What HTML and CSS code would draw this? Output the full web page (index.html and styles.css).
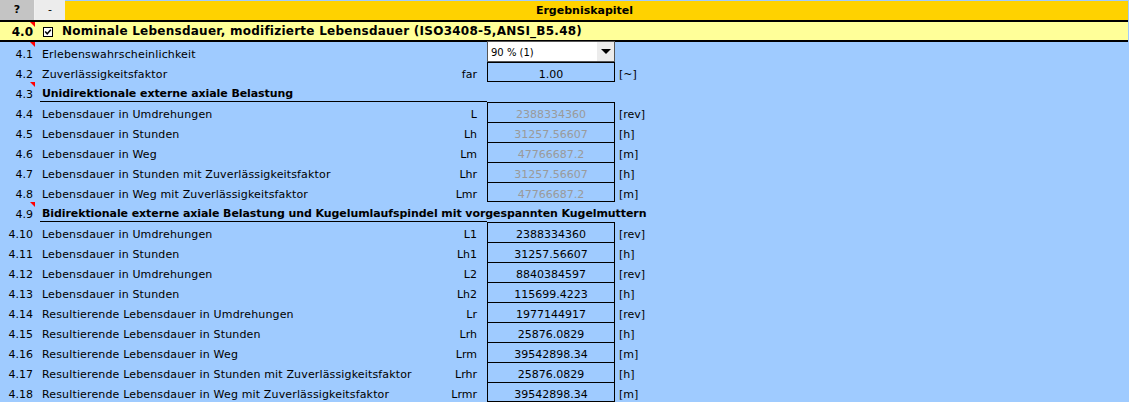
FILE: index.html
```html
<!DOCTYPE html>
<html lang="de">
<head>
  <meta charset="UTF-8">
  <title>Ergebniskapitel</title>
  <link rel="stylesheet" href="styles.css">
</head>
<body>
  <div class="sheet">
    <div class="top-bar">
      <div class="btn-help">?</div>
      <div class="btn-collapse">-</div>
      <div class="chapter-title">Ergebniskapitel</div>
    </div>

    <div class="section-head">
      <div class="num note">4.0</div>
      <div class="head-title">
        <svg class="check" width="10" height="10" viewBox="0 0 10 10"><rect x="0.5" y="0.5" width="9" height="9" fill="#fff" stroke="#000"/><polyline points="2.2,4.6 4.2,6.8 7.8,2.8" fill="none" stroke="#000" stroke-width="1.5"/></svg>
        Nominale Lebensdauer, modifizierte Lebensdauer (ISO3408-5,ANSI_B5.48)
      </div>
    </div>

    <div class="row">
      <div class="num note">4.1</div>
      <div class="label">Erlebenswahrscheinlichkeit</div>
      <div class="select"><span class="select-text">90 % (1)</span><span class="select-btn"></span></div>
      <div class="unit"></div>
    </div>
    <div class="row">
      <div class="num">4.2</div>
      <div class="label">Zuverlässigkeitsfaktor<span class="sym">far</span></div>
      <div class="val last">1.00</div>
      <div class="unit">[~]</div>
    </div>

    <div class="row section">
      <div class="num note">4.3</div>
      <div class="label">Unidirektionale externe axiale Belastung</div>
    </div>
    <div class="row">
      <div class="num">4.4</div>
      <div class="label">Lebensdauer in Umdrehungen<span class="sym">L</span></div>
      <div class="val grey">2388334360</div>
      <div class="unit">[rev]</div>
    </div>
    <div class="row">
      <div class="num">4.5</div>
      <div class="label">Lebensdauer in Stunden<span class="sym">Lh</span></div>
      <div class="val grey">31257.56607</div>
      <div class="unit">[h]</div>
    </div>
    <div class="row">
      <div class="num">4.6</div>
      <div class="label">Lebensdauer in Weg<span class="sym">Lm</span></div>
      <div class="val grey">47766687.2</div>
      <div class="unit">[m]</div>
    </div>
    <div class="row">
      <div class="num">4.7</div>
      <div class="label">Lebensdauer in Stunden mit Zuverlässigkeitsfaktor<span class="sym">Lhr</span></div>
      <div class="val grey">31257.56607</div>
      <div class="unit">[h]</div>
    </div>
    <div class="row">
      <div class="num">4.8</div>
      <div class="label">Lebensdauer in Weg mit Zuverlässigkeitsfaktor<span class="sym">Lmr</span></div>
      <div class="val grey last">47766687.2</div>
      <div class="unit">[m]</div>
    </div>

    <div class="row section">
      <div class="num note">4.9</div>
      <div class="label">Bidirektionale externe axiale Belastung und Kugelumlaufspindel mit vorgespannten Kugelmuttern</div>
    </div>
    <div class="row">
      <div class="num">4.10</div>
      <div class="label">Lebensdauer in Umdrehungen<span class="sym">L1</span></div>
      <div class="val">2388334360</div>
      <div class="unit">[rev]</div>
    </div>
    <div class="row">
      <div class="num">4.11</div>
      <div class="label">Lebensdauer in Stunden<span class="sym">Lh1</span></div>
      <div class="val">31257.56607</div>
      <div class="unit">[h]</div>
    </div>
    <div class="row">
      <div class="num">4.12</div>
      <div class="label">Lebensdauer in Umdrehungen<span class="sym">L2</span></div>
      <div class="val">8840384597</div>
      <div class="unit">[rev]</div>
    </div>
    <div class="row">
      <div class="num">4.13</div>
      <div class="label">Lebensdauer in Stunden<span class="sym">Lh2</span></div>
      <div class="val">115699.4223</div>
      <div class="unit">[h]</div>
    </div>
    <div class="row">
      <div class="num">4.14</div>
      <div class="label">Resultierende Lebensdauer in Umdrehungen<span class="sym">Lr</span></div>
      <div class="val">1977144917</div>
      <div class="unit">[rev]</div>
    </div>
    <div class="row">
      <div class="num">4.15</div>
      <div class="label">Resultierende Lebensdauer in Stunden<span class="sym">Lrh</span></div>
      <div class="val">25876.0829</div>
      <div class="unit">[h]</div>
    </div>
    <div class="row">
      <div class="num">4.16</div>
      <div class="label">Resultierende Lebensdauer in Weg<span class="sym">Lrm</span></div>
      <div class="val">39542898.34</div>
      <div class="unit">[m]</div>
    </div>
    <div class="row">
      <div class="num">4.17</div>
      <div class="label">Resultierende Lebensdauer in Stunden mit Zuverlässigkeitsfaktor<span class="sym">Lrhr</span></div>
      <div class="val">25876.0829</div>
      <div class="unit">[h]</div>
    </div>
    <div class="row">
      <div class="num">4.18</div>
      <div class="label">Resultierende Lebensdauer in Weg mit Zuverlässigkeitsfaktor<span class="sym">Lrmr</span></div>
      <div class="val last">39542898.34</div>
      <div class="unit">[m]</div>
    </div>
  </div>
</body>
</html>
```

FILE: styles.css
```css
body {
  margin: 0;
  background-color: #9fcbff;
  font-family: "DejaVu Sans", Tahoma, sans-serif;
  font-size: 11px;
  color: #000;
}

.sheet {
  width: 1128px;
}

/* top bar */
.top-bar {
  display: flex;
  height: 20px;
  line-height: 20px;
  border-bottom: 2px solid #000;
}

.btn-help {
  width: 34px;
  background-color: #c4c4c4;
  border-right: 1px solid #f0f0f0;
  font-weight: bold;
  text-align: center;
}

.btn-collapse {
  width: 30px;
  background-color: #ececec;
  text-align: center;
}

.chapter-title {
  flex: 1;
  background-color: #ffd200;
  border-top: 1px solid #9fcbff;
  line-height: 20px;
  font-weight: bold;
  text-align: center;
  padding-right: 24px;
}

/* section head (4.0) */
.section-head {
  display: flex;
  height: 18px;
  line-height: 20px;
  background-color: #ffff99;
  border-bottom: 2px solid #000;
  font-size: 12px;
  font-weight: bold;
}

.head-title {
  display: flex;
  align-items: center;
  gap: 9px;
  padding-left: 7px;
  letter-spacing: 0.25px;
  white-space: nowrap;
}

.check {
  margin-top: 1px;
}

/* rows */
.row {
  display: grid;
  grid-template-columns: 36px 451px 128px 1fr;
  grid-template-rows: 20px;
  height: 20px;
  line-height: 25px;
}

.num {
  position: relative;
  width: 36px;
  flex-shrink: 0;
  box-sizing: border-box;
  padding-right: 3px;
  text-align: right;
}

.note::after {
  content: "";
  position: absolute;
  top: 0;
  right: 1px;
  border-top: 5px solid #ff0000;
  border-left: 5px solid transparent;
}

.label {
  display: flex;
  padding: 0 10px 0 6px;
  letter-spacing: 0.15px;
  white-space: nowrap;
}

.sym {
  margin-left: auto;
  letter-spacing: 0;
}

.section .label {
  margin-left: 4px;
  padding-left: 2px;
  font-weight: bold;
  letter-spacing: -0.08px;
  border-bottom: 1px solid #000;
  line-height: 24px;
}

.val {
  box-sizing: border-box;
  border: 1px solid #000;
  border-bottom: none;
  text-align: center;
  line-height: 24px;
}

.val.last { border-bottom: 1px solid #000; }
.val.grey { color: #9a9a9a; }

.unit {
  padding-left: 4px;
}

/* dropdown */
.select {
  display: flex;
  box-sizing: border-box;
  height: 21px;
  margin-top: -1px;
  background-color: #fff;
  border: 1px solid #555;
  font-size: 10px;
  line-height: 21px;
}

.select-text {
  flex: 1;
  padding-left: 3px;
}

.select-btn {
  position: relative;
  width: 17px;
  background-color: #ececec;
}

.select-btn::after {
  content: "";
  position: absolute;
  left: 4px;
  top: 7px;
  border-top: 5px solid #000;
  border-left: 5px solid transparent;
  border-right: 5px solid transparent;
}
```
